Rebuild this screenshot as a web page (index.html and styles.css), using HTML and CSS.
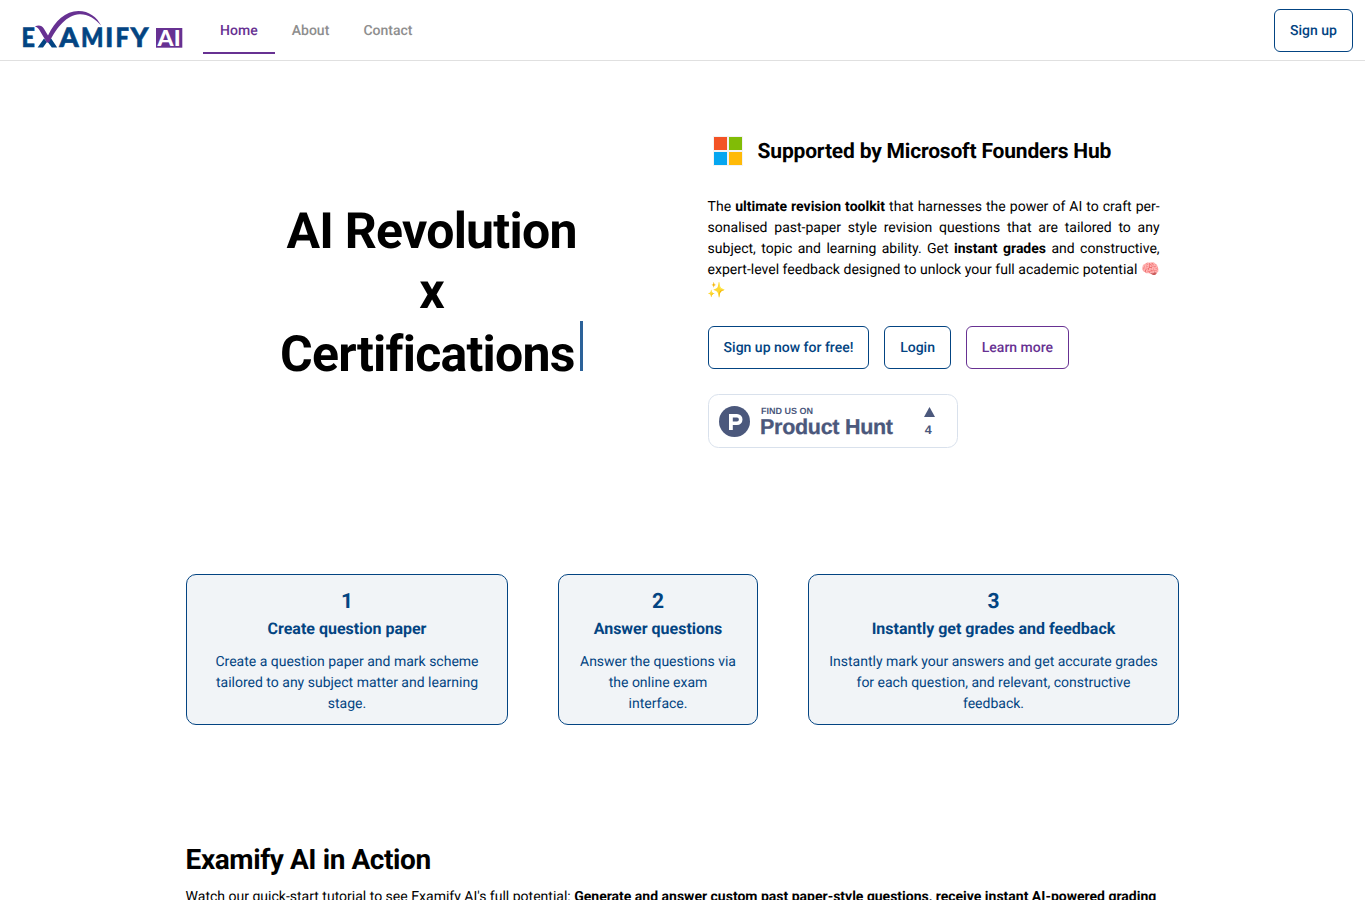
FILE: index.html
```html
<!DOCTYPE html>
<html lang="en">
<head>
<meta charset="utf-8">
<title>Examify AI</title>
<link rel="stylesheet" href="styles.css">
</head>
<body>
<header class="header">
  <svg class="logo" width="164" height="42" viewBox="20 9 164 42" role="img" aria-label="Examify AI">
    <g class="logo-word">
      <text x="21.6" y="47.2" textLength="13.4" lengthAdjust="spacingAndGlyphs">E</text>
      <text x="59.2" y="47.2" textLength="19.5" lengthAdjust="spacingAndGlyphs">A</text>
      <text x="80.9" y="47.2" textLength="22.5" lengthAdjust="spacingAndGlyphs">M</text>
      <text x="105.2" y="47.2" textLength="8" lengthAdjust="spacingAndGlyphs">I</text>
      <text x="115.4" y="47.2" textLength="13.5" lengthAdjust="spacingAndGlyphs">F</text>
      <text x="130.6" y="47.2" textLength="18" lengthAdjust="spacingAndGlyphs">Y</text>
    </g>
    <path d="M37.6 47.4 44 38.5 47 42 43 47.4ZM47 41 50.3 37.2 57.2 47.4H51.8Z" fill="#034482"/>
    <path d="M34.8 26.4C38.5 24.6 42 25.2 43.8 28.4L48 35.4C55 21 65.5 11 78.5 11C89 11 97 17.2 101.3 25.8C95 18.5 87.5 14 79.5 14.3C67 14.8 57 27 49.2 42.4H46.8L39.4 30C38.2 28 37 26.8 34.8 26.4Z" fill="#673192"/>
    <path d="M156 28H182.3V47.7H156Z" fill="#673192"/>
    <text class="logo-ai" x="157.6" y="46" textLength="23" lengthAdjust="spacingAndGlyphs">AI</text>
  </svg>
  <nav class="nav">
    <a class="nav-link nav-active">Home</a>
    <a class="nav-link">About</a>
    <a class="nav-link">Contact</a>
  </nav>
  <a class="button header-button">Sign up</a>
</header>
<main class="page">
  <section class="hero">
    <h1 class="title"><span>AI Revolution</span><span>x</span><span class="typed">Certifications<i class="cursor"></i></span></h1>
    <div class="intro">
      <div class="supported">
        <svg width="30" height="30" viewBox="0 0 30 30"><path fill="#f3f3f3" d="M0 0h30v30H0z"/><path fill="#f35325" d="M1 1h13v13H1z"/><path fill="#81bc06" d="M16 1h13v13H16z"/><path fill="#05a6f0" d="M1 16h13v13H1z"/><path fill="#ffba08" d="M16 16h13v13H16z"/></svg>
        <h2>Supported by Microsoft Founders Hub</h2>
      </div>
      <p class="lead">The <b>ultimate revision toolkit</b> that harnesses the power of AI to craft per&shy;sonalised past-paper style revision questions that are tailored to any subject, topic and learning ability. Get <b>instant grades</b> and constructive, expert-level feedback designed to unlock your full academic potential <span class="emoji">🧠✨</span></p>
      <div class="actions"><a class="button">Sign up now for free!</a><a class="button">Login</a><a class="button button-purple">Learn more</a></div>
      <svg class="hunt" width="250" height="54" viewBox="0 0 250 54" fill="#4b587c">
        <rect x=".5" y=".5" width="249" height="53" rx="10" fill="#fff" stroke="#d9e1ec"/>
        <circle cx="26.5" cy="27.5" r="15.5"/>
        <path d="M21 20h8a5.5 5.5 0 0 1 0 11h-4.2v5H21zM24.8 23.6v3.8H29a1.9 1.9 0 0 0 0-3.8z" fill="#fff" fill-rule="evenodd"/>
        <text x="53" y="20" font-size="9" textLength="52">FIND US ON</text>
        <text class="hunt-name" x="52" y="40" font-size="21.5" textLength="133">Product Hunt</text>
        <path d="M221.5 13 227 23H216z"/>
        <text x="216.8" y="40" font-size="12.5">4</text>
      </svg>
    </div>
  </section>
  <section class="steps">
    <article class="step"><strong class="number">1</strong><h3>Create question paper</h3><p>Create a question paper and mark scheme tailored to any subject matter and learning stage.</p></article>
    <article class="step"><strong class="number">2</strong><h3>Answer questions</h3><p>Answer the questions via the online exam interface.</p></article>
    <article class="step"><strong class="number">3</strong><h3>Instantly get grades and feedback</h3><p>Instantly mark your answers and get accurate grades for each question, and relevant, constructive feedback.</p></article>
  </section>
  <section class="demo">
    <h2>Examify AI in Action</h2>
    <p>Watch our quick-start tutorial to see Examify AI's full potential: <b>Generate and answer custom past paper-style questions, receive instant AI-powered grading</b></p>
  </section>
</main>
</body>
</html>
```
FILE: styles.css
```css
* { box-sizing: border-box; }
body { margin: 0; height: 900px; overflow: hidden; background: #fff; color: #000; font: 14px/21px Roboto, sans-serif; text-rendering: geometricPrecision; }
h1, h2, h3, p { margin: 0; }
.header { height: 61px; border-bottom: 1px solid #e0e0e0; display: flex; align-items: flex-start; padding: 9px 12px 0 20px; }
.logo { flex: none; margin-right: 19px; }
.logo-word { font: 900 26.8px Lato, sans-serif; fill: #034482; stroke: #034482; stroke-width: .6; }
.logo-ai { font: 900 22px Lato, sans-serif; fill: #fff; }
.nav { display: flex; height: 45px; }
.nav-link { padding: 12px 17px 0 17.1px; font-weight: 500; color: #8e8e8e; }
.nav-active { color: #673192; border-bottom: 2px solid #673192; }
.button { display: flex; align-items: center; height: 43px; padding: 2px 15px 0; border: 1px solid #034482; border-radius: 6px; color: #034482; font-weight: 500; white-space: nowrap; }
.button-purple { color: #673192; border-color: #673192; }
.header-button { margin-left: auto; }
.page { width: 993px; margin: 0 0 0 185.6px; }
.hero { display: grid; grid-template-columns: 492px 452px; column-gap: 30px; height: 513px; padding-top: 75px; }
.title { padding-top: 66px; font-size: 50px; line-height: 60px; letter-spacing: -.76px; text-align: center; }
.title span { display: block; }
.title .typed { display: flex; justify-content: center; margin-top: 3px; }
.cursor { width: 3px; height: 50px; margin: -4px 0 0 5.5px; background: #2c6299; }
.supported { display: flex; align-items: center; gap: 15px; height: 30px; padding-left: 5px; }
.supported h2 { padding-top: 2px; font-size: 21px; line-height: 30px; letter-spacing: -.18px; white-space: nowrap; }
.lead { margin-top: 31px; height: 105px; text-align: justify; }
.emoji { font-size: 15px; line-height: 0; }
.actions { display: flex; gap: 14.8px; margin-top: 24px; }
.hunt { display: block; margin-top: 25px; font-family: "Liberation Sans", sans-serif; font-weight: 700; }
.hunt-name { stroke: #4b587c; stroke-width: .3; }
.steps { display: grid; grid-template-columns: 322px 200px 371px; gap: 50px; }
.step { height: 151px; padding: 14px 19.6px 0 20.4px; border: 1px solid #034482; border-radius: 10px; background: #f1f4f7; color: #034482; text-align: center; }
.number { display: block; font-size: 21px; line-height: 27px; }
.step h3 { font-size: 16px; line-height: 24px; margin: 1px 0 11px; }
.demo { margin-top: 118px; }
.demo h2 { font-size: 28px; line-height: 34px; letter-spacing: -.42px; }
.demo p { margin-top: 10px; white-space: nowrap; }
```
